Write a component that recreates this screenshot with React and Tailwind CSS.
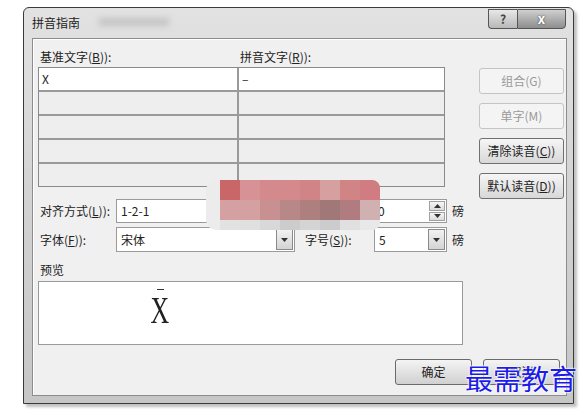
import React from "react";

const font = { fontFamily: '"Noto Sans CJK SC", "Noto Sans", sans-serif' };

const mosaic = [
  ["#c96668", "#d69294", "#d48a8c", "#d48a8c", "#d08486", "#d6a0a0", "#d08486", "#d07c80"],
  ["#d4a0a2", "#d4a0a2", "#c89090", "#b88888", "#ad7f7f", "#a07878", "#b07c80", "#d0b0b0"],
  ["#e2e2e2", "#e0e0e0", "#d8d8d8", "#cccccc", "#d4d4d4", "#cccccc", "#e0e0e0", "#e8e8e8"],
];

// 带下划线快捷键的标签
const Label = ({ text, k, tail = "):" }) => (
  <span>
    {text}(<span className="underline">{k}</span>){tail === "):" ? "):" : tail}
  </span>
);

const SideButton = ({ children, disabled }) => (
  <div
    className={`h-[26px] w-[85px] rounded-[3px] border flex items-center justify-center text-[12px] ${
      disabled
        ? "border-[#c4c4c4] bg-[#f4f4f4] text-[#9a9a9a]"
        : "border-[#707070] bg-gradient-to-b from-[#f6f6f6] to-[#d8d8d8] text-[#222]"
    }`}
  >
    {children}
  </div>
);

const Arrow = ({ up }) => (
  <svg width="7" height="4" viewBox="0 0 7 4">
    <path d={up ? "M0 4 L3.5 0 L7 4 Z" : "M0 0 L3.5 4 L7 0 Z"} fill="#333" />
  </svg>
);

const DropBtn = () => (
  <div className="absolute right-[1px] top-[1px] bottom-[1px] w-[17px] border border-[#8a8a8a] bg-gradient-to-b from-[#f2f2f2] to-[#d4d4d4] flex items-center justify-center">
    <Arrow />
  </div>
);

export default function App() {
  return (
    <div className="w-[588px] h-[410px] bg-white relative overflow-hidden text-[#222]" style={font}>
      {/* 对话框外框 */}
      <div className="ml-[23px] mt-[7px] w-[551px] h-[397px] border border-[#3a3a3a] rounded-tl-[6px] rounded-tr-[6px] bg-gradient-to-b from-[#e2e2e2] via-[#d2d2d2] to-[#c6c6c6] shadow-[3px_3px_3px_rgba(0,0,0,0.25)] flex flex-col">
        {/* 标题栏 */}
        <div className="h-[30px] flex items-start relative">
          <div className="pl-[8px] pt-[6px] text-[12px] text-[#222]">拼音指南</div>
          <div className="absolute left-[75px] top-[10px] w-[70px] h-[8px] bg-[#c4c4c4] blur-[3px]" />
          <div className="ml-auto mr-[7px] mt-[1px] flex">
            <div className="w-[29px] h-[20px] border border-[#555] border-r-0 rounded-bl-[4px] bg-gradient-to-b from-[#e8e8e8] to-[#b8b8b8] flex items-center justify-center text-[12px] font-bold text-[#444]">
              ?
            </div>
            <div className="w-[49px] h-[20px] border border-[#555] rounded-br-[4px] bg-gradient-to-b from-[#d0d0d0] to-[#8e8e8e] flex items-center justify-center text-[13px] font-bold text-white [text-shadow:0_0_2px_#333]">
              x
            </div>
          </div>
        </div>

        {/* 内容面板 */}
        <div className="ml-[8px] w-[535px] h-[358px] border border-[#8c8c8c] bg-[#f0f0f0] flex flex-col pt-[9px] pl-[5px] text-[12px] shadow-[inset_1px_1px_0_#fff]">
          <div className="flex">
            {/* 左列 */}
            <div className="w-[430px] flex flex-col">
              <div className="h-[19px] flex w-[407px]">
                <div className="w-[201px] pl-[2px]">
                  <Label text="基准文字" k="B" />
                </div>
                <div className="pl-[1px]">
                  <Label text="拼音文字" k="R" />
                </div>
              </div>
              <div className="w-[407px] h-[120px] border border-[#8a8a8a] flex flex-col">
                {[0, 1, 2, 3, 4].map((i) => (
                  <div
                    key={i}
                    className={`flex flex-1 ${i < 4 ? "border-b-2 border-[#9a9a9a]" : ""} ${
                      i === 0 ? "bg-white" : "bg-[#eeeeee]"
                    }`}
                  >
                    <div className="w-[200px] border-r-2 border-[#9a9a9a] pl-[3px] flex items-center">
                      {i === 0 ? "X" : ""}
                    </div>
                    <div className="flex-1 pl-[3px] flex items-center">{i === 0 ? "–" : ""}</div>
                  </div>
                ))}
              </div>

              {/* 对齐方式 */}
              <div className="flex items-center mt-[12px] h-[24px]">
                <div className="w-[78px] pl-[2px]">
                  <Label text="对齐方式" k="L" />
                </div>
                <div className="relative w-[179px] h-[24px] border border-[#9a9a9a] bg-white flex items-center pl-[4px]">
                  1-2-1
                  <DropBtn />
                </div>
                <div className="ml-[10px] w-[68px]">
                  <Label text="偏移量" k="O" />
                </div>
                <div className="relative w-[74px] h-[24px] border border-[#9a9a9a] bg-white flex items-center pl-[4px]">
                  0
                  <div className="absolute right-[1px] top-[1px] bottom-[1px] w-[16px] flex flex-col gap-[1px]">
                    <div className="flex-1 border border-[#a0a0a0] bg-gradient-to-b from-[#f6f6f6] to-[#dcdcdc] flex items-center justify-center">
                      <Arrow up />
                    </div>
                    <div className="flex-1 border border-[#a0a0a0] bg-gradient-to-b from-[#f6f6f6] to-[#dcdcdc] flex items-center justify-center">
                      <Arrow />
                    </div>
                  </div>
                </div>
                <div className="ml-[5px]">磅</div>
              </div>

              {/* 字体 / 字号 */}
              <div className="flex items-center mt-[4px] h-[25px]">
                <div className="w-[78px] pl-[2px]">
                  <Label text="字体" k="F" />
                </div>
                <div className="relative w-[179px] h-[25px] border border-[#9a9a9a] bg-white flex items-center pl-[4px]">
                  宋体
                  <DropBtn />
                </div>
                <div className="ml-[10px] w-[69px]">
                  <Label text="字号" k="S" />
                </div>
                <div className="relative w-[73px] h-[25px] border border-[#9a9a9a] bg-white flex items-center pl-[4px]">
                  5
                  <DropBtn />
                </div>
                <div className="ml-[5px]">磅</div>
              </div>

              <div className="mt-[10px] h-[16px] pl-[2px] leading-[16px]">预览</div>
              <div className="mt-[3px] w-[425px] h-[64px] border border-[#9a9a9a] bg-white relative">
                <div className="absolute left-[106px] top-[7px] flex flex-col items-center w-[30px]">
                  <div className="w-[7px] h-[1px] bg-[#333]" />
                  <div
                    className="text-[38px] leading-[40px] text-[#222] scale-x-[0.68]"
                    style={{ fontFamily: '"Liberation Serif", serif' }}
                  >
                    X
                  </div>
                </div>
              </div>
            </div>

            {/* 右侧按钮 */}
            <div className="ml-[11px] mt-[20px] flex flex-col gap-[9px]">
              <SideButton disabled>组合(G)</SideButton>
              <SideButton disabled>单字(M)</SideButton>
              <SideButton>
                <Label text="清除读音" k="C" tail=")" />
              </SideButton>
              <SideButton>
                <Label text="默认读音" k="D" tail=")" />
              </SideButton>
            </div>
          </div>

          {/* 确定 / 取消 */}
          <div className="flex mt-[14px] ml-[357px] gap-[11px]">
            <div className="w-[77px] h-[26px] rounded-[3px] border border-[#6a6a6a] bg-gradient-to-b from-[#f4f4f4] to-[#d0d0d0] flex items-center justify-center">
              确定
            </div>
            <div className="w-[77px] h-[26px] rounded-[3px] border border-[#6a6a6a] bg-gradient-to-b from-[#f4f4f4] to-[#d0d0d0] flex items-center justify-center">
              取消
            </div>
          </div>
        </div>
      </div>

      {/* 马赛克遮挡 */}
      <div className="absolute left-[206px] top-[180px] w-[174px] h-[50px] rounded-[8px] overflow-hidden flex">
        <div className="w-[14px] bg-[#ececec] rounded-l-[10px]" />
        <div className="flex flex-col">
          {mosaic.map((row, r) => (
            <div key={r} className={`flex ${r === 2 ? "h-[10px]" : "h-[20px]"}`}>
              {row.map((c, i) => (
                <div key={i} className="w-[20px] h-full" style={{ backgroundColor: c }} />
              ))}
            </div>
          ))}
        </div>
      </div>

      {/* 水印 */}
      <div
        className="absolute left-[465px] top-[361px] text-[28px] leading-[34px] tracking-[0px] text-[#1c1ce8] [text-shadow:0_0_2px_#fff,0_0_2px_#fff,0_0_2px_#fff]"
        style={font}
      >
        最需教育
      </div>
    </div>
  );
}
